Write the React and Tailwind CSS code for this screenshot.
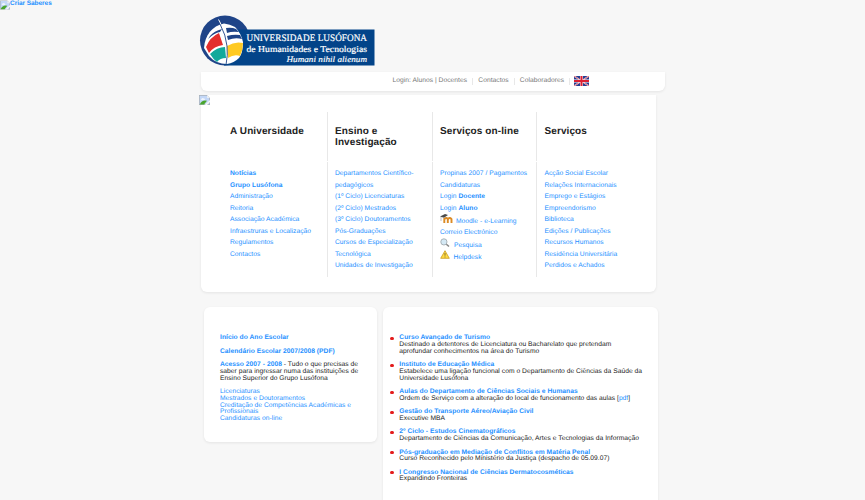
import React from "react";

const Broken = ({ className }) => (
  <svg viewBox="0 0 11 10" className={className} aria-hidden="true">
    <path d="M0 0H8L11 3V10H0Z" fill="#a9b0b8" />
    <path d="M.7 .7H7.6L10.3 3.3V9.3H.7Z" fill="#c3d7f7" />
    <path d="M2 4.5Q3 2.6 4.6 3.4Q6 3.3 6 4.8H2Z" fill="#fff" />
    <path d="M.7 9.6Q3 4.500 8 5.800L5 9.6Z" fill="#49a52d" />
    <path d="M5.8 10L11 5V7L8 10Z" fill="#f7f7f7" />
    <path d="M8 0V3H11Z" fill="#e9edf2" />
  </svg>
);

const Logo = () => (
  <svg viewBox="0 0 176 52" className="block h-[52px] w-[176px] overflow-visible">
    <circle cx="26" cy="25.500" r="25" fill="#1f4488" />
    <path d="M25 14.500H175.500V50.500H25Z" fill="#034489" />
    <path d="M5 33C6 20 13 11 25 8.500Q31 9 36 12Q42 18 44 27Q44 38 40 43Q35 48 28 49Q17 49 10 41Z" fill="#fff" />
    <path d="M27 13Q33 12 37 14L40 17Q33 16 28 18ZM28 21Q35 19 41 20L43 24Q36 22 29 25Z" fill="#1f4488" />
    <path d="M11 21Q15 16 23 14L21 17Q15 18 9 24Z" fill="#1f4488" />
    <path d="M7 32Q11 22 20 18L24 30Q15 31 10 38Z" fill="#e32e2c" />
    <path d="M11 39Q18 32 26 32L27 43Q21 43 18 47Q14 44 11 39Z" fill="#12a99b" />
    <path d="M28 31Q36 26 44 28Q44 35 41 41Q35 39 29 43Z" fill="#ffca22" />
    <path d="M21 9Q27 20 28 31Q29 40 27 50" fill="none" stroke="#1f4488" strokeWidth=".9" />
    <path d="M19.500 4.500Q21 7 22 9.500" fill="none" stroke="#fff" strokeWidth="1" />
    <g fill="#fff" stroke="#fff" fontFamily="'Liberation Serif', serif">
      <text x="47.500" y="26.200" fontSize="10" textLength="120.500" lengthAdjust="spacingAndGlyphs" strokeWidth=".2">UNIVERSIDADE LUSÓFONA</text>
      <text x="47.500" y="36.800" fontSize="9" textLength="120.500" lengthAdjust="spacingAndGlyphs" strokeWidth=".2">de Humanidades e Tecnologias</text>
      <text x="87.500" y="46.800" fontSize="8.300" fontStyle="italic" textLength="80.500" lengthAdjust="spacingAndGlyphs" strokeWidth=".15">Humani nihil alienum</text>
    </g>
  </svg>
);

const Flag = () => (
  <svg viewBox="0 0 15 10" className="-ml-px h-[10px] w-[15px]">
    <path d="M0 0H15V10H0Z" fill="#263d91" />
    <path d="M0 0L15 10M15 0L0 10" stroke="#fff" strokeWidth="1.400" />
    <path d="M0 0L15 10M15 0L0 10" stroke="#e04050" strokeWidth=".8" />
    <path d="M7.500 0V10M0 5H15" stroke="#fff" strokeWidth="2.800" />
    <path d="M7.500 0V10M0 5H15" stroke="#dc1f32" strokeWidth="2" />
  </svg>
);

const Moodle = () => (
  <svg viewBox="0 0 13 10" className="mr-[3px] h-[10px] w-[13px]">
    <path d="M4.300 9V4M4.300 5.500Q6 2.700 7.800 5V9M7.800 5.500Q9.500 2.700 11.500 5V9" fill="none" stroke="#dc8b25" strokeWidth="1.900" />
    <path d="M0 2.500L5 0L8 1L4 3.800Z" fill="#4b4b4b" />
    <path d="M1 3V7" stroke="#999" strokeWidth=".6" />
  </svg>
);

const Search = () => (
  <svg viewBox="0 0 10 10" className="-mt-px mr-[4px] h-[10px] w-[10px]">
    <path d="M5.500 5.500L9 8.500" stroke="#888" strokeWidth="1.600" />
    <circle cx="3.900" cy="3.900" r="3.100" fill="#d5e9f5" stroke="#a4adb2" strokeWidth=".9" />
  </svg>
);

const Warning = () => (
  <svg viewBox="0 0 10 9" className="-mt-px mr-[3.500px] h-[9px] w-[10px]">
    <path d="M5 .7L9.300 8.300H.7Z" fill="#ffdb45" stroke="#c99b1c" strokeWidth=".8" strokeLinejoin="round" />
    <path d="M5 3V5.700M5 6.500V7.400" stroke="#6a5720" strokeWidth=".8" />
  </svg>
);

const columns = [
  { title: "A Universidade", width: "w-[105px]", links: [<b>Notícias</b>, <b>Grupo Lusófona</b>, "Administração", "Reitoria", "Associação Académica", "Infraestruras e Localização", "Regulamentos", "Contactos"] },
  { title: <>Ensino e<br />Investigação</>, width: "w-[105px]", links: ["Departamentos Científico-", "pedagógicos", "(1º Ciclo) Licenciaturas", "(2º Ciclo) Mestrados", "(3º Ciclo) Doutoramentos", "Pós-Graduações", "Cursos de Especialização", "Tecnológica", "Unidades de Investigação"] },
  { title: "Serviços on-line", width: "w-[104.500px]", links: ["Propinas 2007 / Pagamentos", "Candidaturas", <>Login <b>Docente</b></>, <>Login <b>Aluno</b></>] },
  { title: "Serviços", width: "w-[104px]", links: ["Acção Social Escolar", "Relações Internacionais", "Emprego e Estágios", "Empreendorismo", "Biblioteca", "Edições / Publicações", "Recursos Humanos", "Residência Universitária", "Perdidos e Achados"] },
];

const news = [
  ["Curso Avançado de Turismo", <>Destinado a detentores de Licenciatura ou Bacharelato que pretendam<br />aprofundar conhecimentos na área do Turismo</>],
  ["Instituto de Educação Médica", <>Estabelece uma ligação funcional com o Departamento de Ciências da Saúde da<br />Universidade Lusófona</>],
  ["Aulas do Departamento de Ciências Sociais e Humanas", <>Ordem de Serviço com a alteração do local de funcionamento das aulas [<a className="text-[#1e90ff]">pdf</a>]</>],
  ["Gestão do Transporte Aéreo/Aviação Civil", "Executive MBA"],
  ["2º Ciclo - Estudos Cinematográficos", "Departamento de Ciências da Comunicação, Artes e Tecnologias da Informação"],
  ["Pós-graduação em Mediação de Conflitos em Matéria Penal", "Curso Reconhecido pelo Ministério da Justiça (despacho de 05.09.07)"],
  ["I Congresso Nacional de Ciências Dermatocosméticas", "Expandindo Fronteiras"],
];

const Separator = () => <span className="mx-[5.100px] h-[7px] w-px bg-[#e8e8e8]" />;

export default function App() {
  return (
    <div className="relative h-[500px] w-[865px] overflow-hidden bg-[#f7f7f7] font-['Liberation_Sans',Arial,sans-serif] text-[6.700px] leading-[6.850px] tracking-[0.030px] text-[#222] [text-rendering:geometricPrecision]">
      <a className="absolute top-0 left-0 flex font-bold text-[#1e90ff]">
        <Broken className="h-[10px] w-[10px]" />
        <span className="pt-[.7px] text-[6.500px] tracking-[-0.04px] whitespace-nowrap">Criar Saberes</span>
      </a>
      <header className="pt-[15px] pl-[199px]"><Logo /></header>

      <nav className="mt-[5px] ml-[201px] flex h-[19px] w-[464px] items-start rounded-b-[6px] bg-white pt-[4px] pl-[191.500px] whitespace-nowrap text-[#777] shadow-[0_1px_3px_#00000014]">
        <div className="flex h-[10px] items-center">
          <span>Login: Alunos | Docentes</span><Separator />
          <span>Contactos</span><Separator />
          <span>Colaboradores</span><Separator />
          <Flag />
        </div>
      </nav>

      <section className="relative mt-[4px] ml-[201px] h-[197px] w-[455px] rounded-b-[6px] bg-white pt-[17px] pl-[21.500px] shadow-[0_1px_3px_#00000014]">
        <Broken className="absolute top-0 left-[-2px] h-[10px] w-[11px]" />
        <div className="flex">
          {columns.map((col, i) => (
            <div key={i} className={col.width}>
              <div className={"h-[49px] pt-[13.500px] pl-[7.500px] text-[10px] leading-[11px] font-bold tracking-[0.1px] " + (i < 3 ? "border-r border-[#e8e8e8]" : "")}>{col.title}</div>
              <div className={"mt-px h-[115px] pt-[6.300px] pl-[7.500px] leading-[11.500px] whitespace-nowrap text-[#1e90ff] " + (i < 3 ? "border-r border-[#e8e8e8]" : "")}>
                {col.links.map((link, n) => <div key={n} className="h-[11.500px]">{link}</div>)}
                {i === 2 && (
                  <>
                    <div className="flex h-[13px] items-start"><Moodle /><span className="pt-[1.600px]">Moodle - e-Learning</span></div>
                    <div className="h-[11.500px]">Correio Electrónico</div>
                    <div className="flex h-[12.500px] items-start"><Search /><span className="pt-[1.200px]">Pesquisa</span></div>
                    <div className="flex h-[12px] items-start"><Warning /><span className="pt-[.5px]">Helpdesk</span></div>
                  </>
                )}
              </div>
            </div>
          ))}
        </div>
      </section>

      <main className="mt-[15px] ml-[204px] flex items-start gap-[6px] whitespace-nowrap">
        <section className="h-[135px] w-[173px] rounded-[6px] bg-white pt-[28.200px] pl-[16px] shadow-[0_1px_3px_#00000014]">
          <p className="mb-[6.500px] font-bold text-[#1e90ff]">Início do Ano Escolar</p>
          <p className="mb-[6.500px] font-bold text-[#1e90ff]">Calendário Escolar 2007/2008 (PDF)</p>
          <p className="mb-[6.500px]"><b className="text-[#1e90ff]">Acesso 2007 - 2008</b> - Tudo o que precisas de<br />saber para ingressar numa das instituições de<br />Ensino Superior do Grupo Lusófona</p>
          <p className="text-[#1e90ff]">Licenciaturas<br />Mestrados e Doutoramentos<br />Creditação de Competências Académicas e<br />Profissionais<br />Candidaturas on-line</p>
        </section>
        <section className="h-[210px] w-[275px] rounded-t-[6px] bg-white pt-[28.200px] pl-[7.300px] shadow-[0_1px_3px_#00000014]">
          <ul>
            {news.map(([title, body]) => (
              <li key={title} className="mb-[6.450px] flex">
                <span className="mt-[1.400px] mr-[5px] h-[3px] w-[4px] rounded-[1.500px] bg-[#e31b1b]" />
                <div><b className="block text-[#1e90ff]">{title}</b><p>{body}</p></div>
              </li>
            ))}
          </ul>
        </section>
      </main>
    </div>
  );
}
